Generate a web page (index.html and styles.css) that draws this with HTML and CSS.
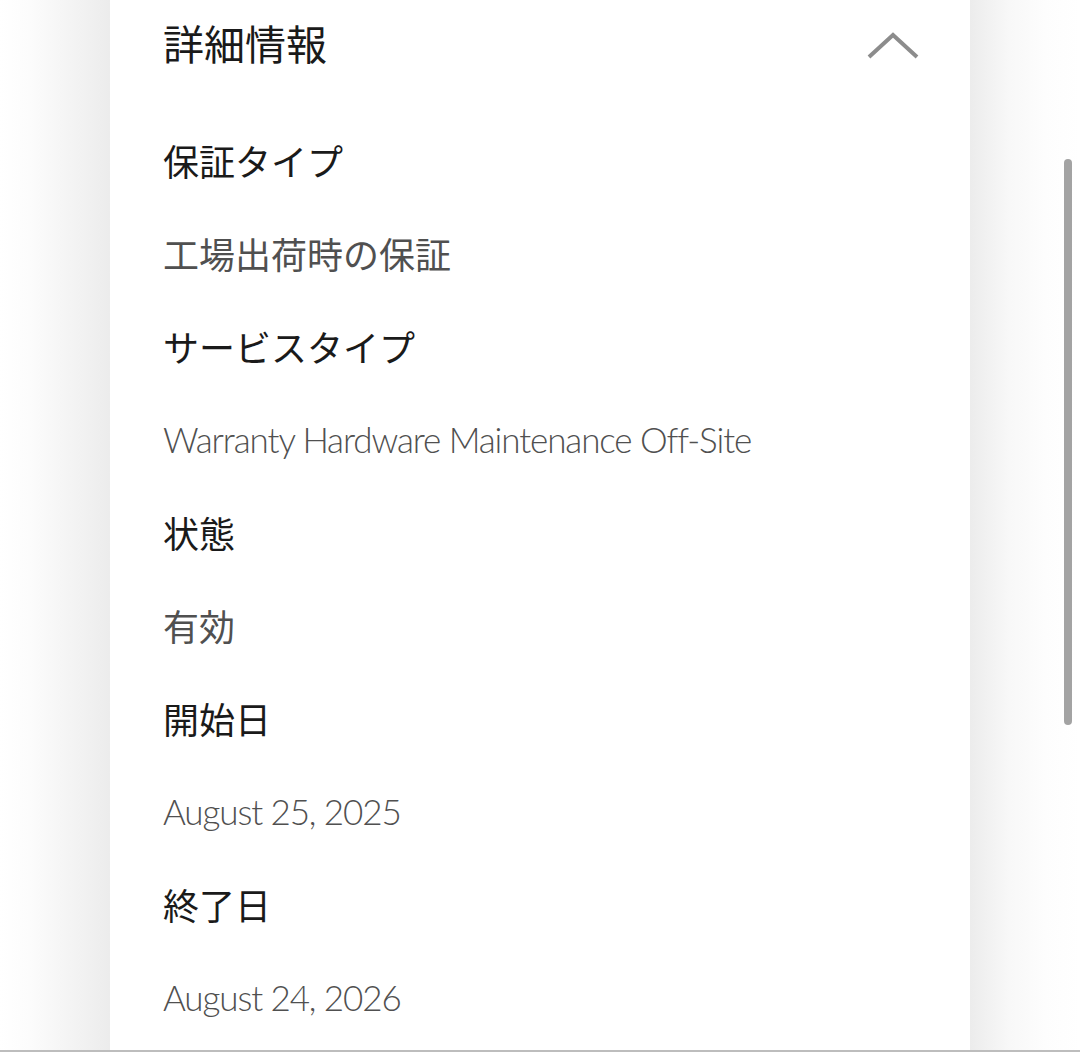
FILE: index.html
```html
<!DOCTYPE html>
<html lang="ja">
<head>
  <meta charset="UTF-8" />
  <meta name="viewport" content="width=device-width, initial-scale=1.0"/>
  <title>詳細情報</title>
  <link rel="stylesheet" href="styles.css">
</head>
<body>
  <div class="page">
    <div class="card">
      <div class="card-header">
        <h2 class="title">詳細情報</h2>
        <svg class="chevron" width="54" height="30" viewBox="0 0 54 30" aria-hidden="true">
          <polyline points="3,26 27,4 51,26" fill="none" stroke="#8c8c8c" stroke-width="4" />
        </svg>
      </div>
      <dl class="details">
        <dt>保証タイプ</dt>
        <dd>工場出荷時の保証</dd>
        <dt>サービスタイプ</dt>
        <dd class="latin">Warranty Hardware Maintenance Off-Site</dd>
        <dt>状態</dt>
        <dd>有効</dd>
        <dt>開始日</dt>
        <dd class="latin">August 25, 2025</dd>
        <dt>終了日</dt>
        <dd class="latin">August 24, 2026</dd>
      </dl>
    </div>
    <div class="scrollbar"></div>
  </div>
</body>
</html>
```

FILE: styles.css
```css
* {
  box-sizing: border-box;
}
body {
  margin: 0;
  font-family: Lato, "Noto Sans CJK JP", sans-serif;
  background: #fff;
}
.page {
  position: relative;
  height: 1052px;
  overflow: hidden;
  border-bottom: 2px solid #bdbdbd;
  background: linear-gradient(to right,
    #fff 0, #fcfcfc 30px, #ececec 110px,
    #ececec 970px, #f8f8f8 1010px, #fdfdfd 1045px, #fff 1080px);
}
.card {
  width: 860px;
  height: 100%;
  margin: 0 auto;
  background: #fff;
  padding: 0 50px 0 53px;
}
.card-header {
  height: 90px;
  padding-bottom: 6px;
  display: flex;
  align-items: center;
  justify-content: space-between;
}
.title {
  margin: 0;
  font-family: "Noto Sans CJK JP", sans-serif;
  font-size: 41px;
  font-weight: 400;
  color: #1a1a1a;
}
.chevron {
  margin-top: 8px;
}
.details {
  margin: 0;
  padding-top: 24px;
}
.details dt,
.details dd {
  margin: 0;
  height: 93px;
  line-height: 93px;
  font-family: "Noto Sans CJK JP", sans-serif;
  font-size: 36px;
  white-space: nowrap;
}
.details dt {
  color: #1a1a1a;
}
.details dd {
  color: #505050;
}
.details dd.latin {
  font-family: Lato, sans-serif;
  font-weight: 300;
  font-size: 35px;
  letter-spacing: -1.1px;
}
.scrollbar {
  position: absolute;
  left: 1064px;
  top: 159px;
  width: 8px;
  height: 566px;
  border-radius: 4px;
  background: #a3a3a3;
}
```
